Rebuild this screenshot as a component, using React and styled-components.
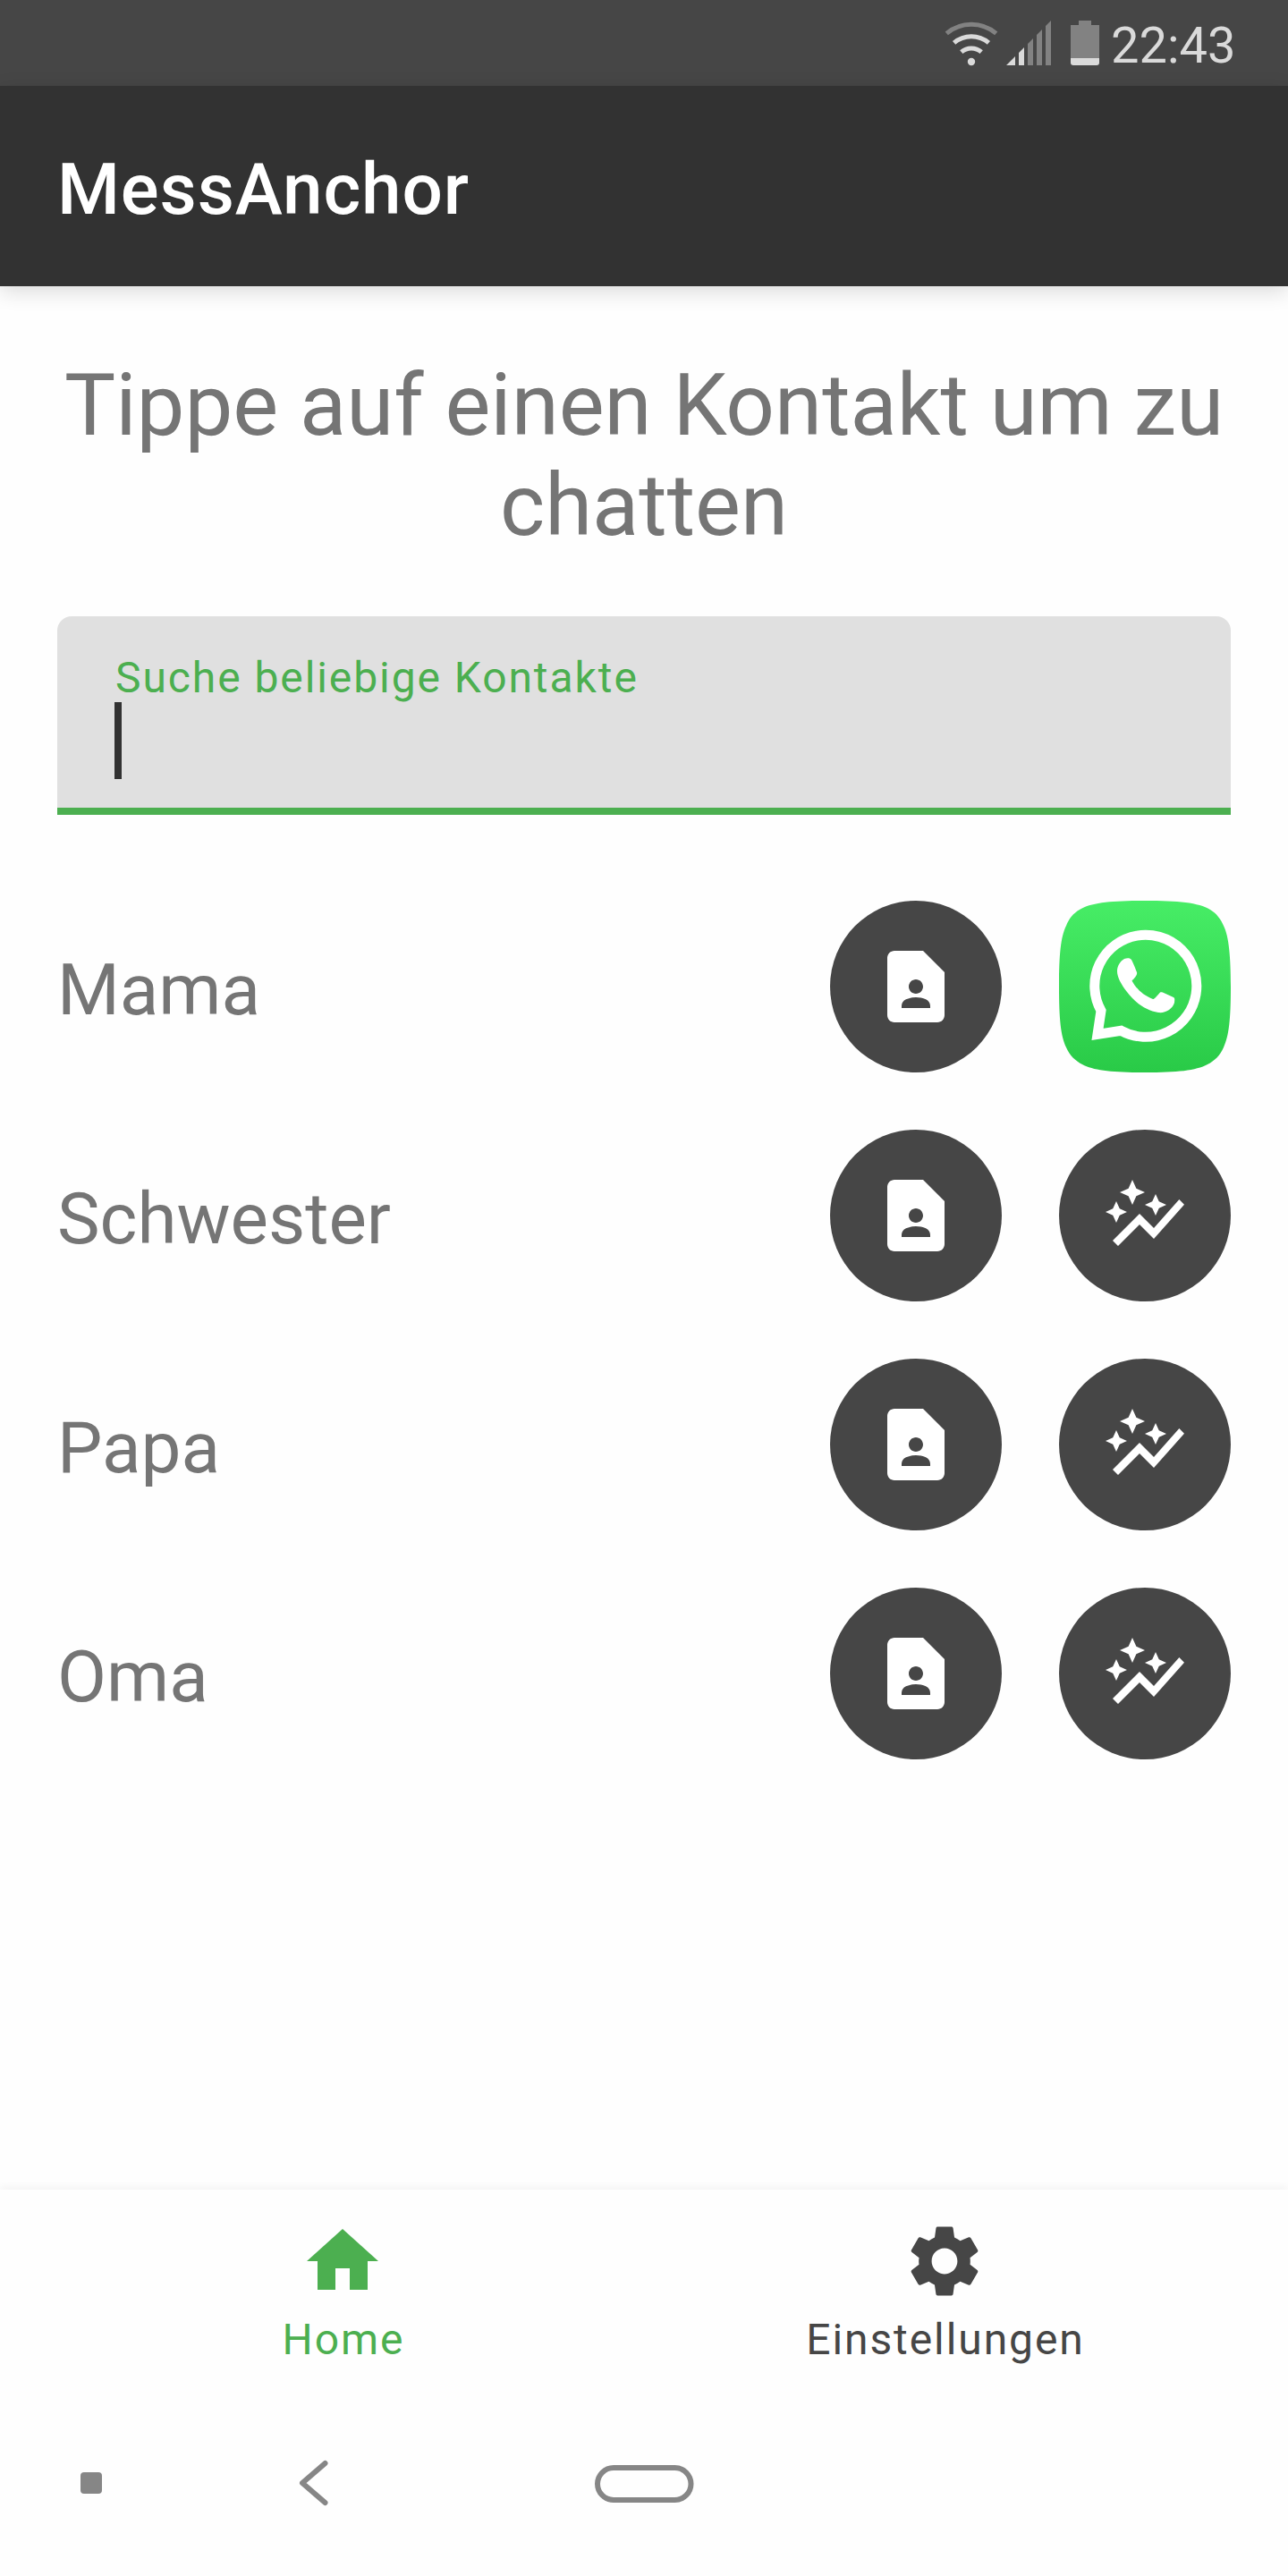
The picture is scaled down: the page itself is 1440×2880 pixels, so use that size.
import React from "react";
import styled, { createGlobalStyle } from "styled-components";

const Global = createGlobalStyle`
  * { box-sizing: border-box; }
  body { margin: 0; background: #fefefe; font-family: Roboto, "Liberation Sans", sans-serif; }
`;

const Screen = styled.div`
  width: 1440px;
  height: 2880px;
  display: flex;
  flex-direction: column;
  background: #fefefe;
  overflow: hidden;
`;

const StatusBar = styled.header`
  height: 96px;
  flex: none;
  display: flex;
  justify-content: flex-end;
  gap: 12px;
  padding-right: 60px;
  background: #464646;
`;

const StatusIcons = styled.svg`
  width: 180px;
  height: 96px;
  display: block;
`;

const Clock = styled.time`
  width: 138px;
  padding-top: 5px;
  font-size: 56px;
  line-height: 92px;
  color: #dadada;
  white-space: nowrap;
`;

const AppBar = styled.div`
  height: 224px;
  flex: none;
  display: flex;
  align-items: center;
  padding: 0 64px;
  background: #323232;
  box-shadow: 0 6px 22px rgba(0, 0, 0, 0.14);
`;

const AppTitle = styled.h1`
  margin: 0;
  padding-top: 8px;
  font-size: 80px;
  line-height: 94px;
  font-weight: 500;
  letter-spacing: 0.9px;
  color: #fff;
`;

const Content = styled.main`
  flex: 1;
  padding: 77px 64px 0;
`;

const Heading = styled.h2`
  margin: 0 -10px;
  font-size: 96px;
  line-height: 112px;
  font-weight: 400;
  text-align: center;
  color: #757575;
`;

const SearchField = styled.label`
  height: 222px;
  margin-top: 68px;
  display: flex;
  flex-direction: column;
  padding: 41px 64px 0;
  border-radius: 16px 16px 0 0;
  border-bottom: 8px solid #4caf50;
  background: #e0e0e0;
`;

const SearchLabel = styled.span`
  height: 55px;
  padding-left: 1px;
  font-size: 48px;
  line-height: 56px;
  letter-spacing: 1.92px;
  color: #4caf50;
`;

const Caret = styled.span`
  width: 8px;
  height: 86px;
  background: #323232;
`;

const ContactList = styled.ul`
  margin: 96px 0 0;
  padding: 0;
  display: flex;
  flex-direction: column;
  gap: 64px;
  list-style: none;
`;

const Contact = styled.li`
  height: 192px;
  display: flex;
  align-items: center;
  gap: 64px;
`;

const ContactName = styled.span`
  flex: 1;
  padding-top: 8px;
  font-size: 80px;
  line-height: 94px;
  color: #757575;
`;

const RoundButton = styled.button`
  width: 192px;
  height: 192px;
  display: flex;
  align-items: center;
  justify-content: center;
  padding: 0;
  border: 0;
  border-radius: 50%;
  background: #464646;
`;

const AppButton = styled.button`
  width: 192px;
  height: 192px;
  padding: 0;
  border: 0;
  background: none;

  svg { display: block; }
`;

const Glyph = styled.svg`
  width: 96px;
  height: 96px;
  display: block;
  fill: ${(p) => p.$color || "#fff"};
`;

const BottomNav = styled.nav`
  height: 224px;
  flex: none;
  display: flex;
  padding-left: 46.5px;
  background: #fefefe;
  box-shadow: 0 -4px 8px rgba(0, 0, 0, 0.04);
`;

const NavItem = styled.a`
  width: 673px;
  display: flex;
  flex-direction: column;
  align-items: center;
  padding-top: 32px;
  color: ${(p) => (p.$active ? "#4caf50" : "#464646")};
`;

const NavLabel = styled.span`
  margin-top: 12px;
  padding-left: 2px;
  font-size: 48px;
  line-height: 56px;
  letter-spacing: 1.92px;
`;

const SystemBar = styled.footer`
  height: 208px;
  flex: none;
  background: #fefefe;

  svg { display: block; }
`;

const WifiSignalBattery = () => (
  <StatusIcons viewBox="1050 0 180 96" aria-hidden="true">
    <g fill="none" strokeWidth="5">
      <path d="M1058.300 37.400 A43 43 0 0 1 1113.700 37.400" stroke="#828282" />
      <path d="M1066.600 47.800 A30 30 0 0 1 1105.400 47.800" stroke="#dadada" />
      <path d="M1074.800 58.200 A17 17 0 0 1 1097.200 58.200" stroke="#dadada" />
    </g>
    <circle cx="1086" cy="69" r="4.200" fill="#dadada" />
    <path d="M1125 73 L1135 63 V73 Z M1139 59 L1145 53 V73 H1139 Z" fill="#dadada" />
    <path d="M1149 49 L1155 43 V73 H1149 Z M1159 39 L1165 33 V73 H1159 Z M1169 29 L1175 23 V73 H1169 Z" fill="#828282" />
    <path d="M1206 23 H1220 V28 H1229 V65 H1197 V28 H1206 Z" fill="#828282" />
    <path d="M1197 65 H1229 V70 Q1229 73 1226 73 H1200 Q1197 73 1197 70 Z" fill="#dadada" />
  </StatusIcons>
);

const ContactPageIcon = () => (
  <Glyph viewBox="0 0 24 24">
    <path d="M14 2H6c-1.100 0-2 .9-2 2v16c0 1.100.89 2 1.990 2H18c1.100 0 2-.9 2-2V8l-6-6zm-2 8c1.100 0 2 .9 2 2s-.9 2-2 2-2-.9-2-2 .9-2 2-2zm4 8H8v-.57c0-.81.48-1.530 1.220-1.850.85-.37 1.790-.58 2.780-.58s1.930.21 2.780.58c.74.32 1.220 1.040 1.220 1.850V18z" />
  </Glyph>
);

const AutoGraphIcon = () => (
  <Glyph viewBox="0 0 24 24">
    <path d="M14.060 9.940 12 9l2.060-.94L15 6l.94 2.060L18 9l-2.060.94L15 12l-.94-2.060zM4 14l.94-2.060L7 11l-2.060-.94L4 8l-.94 2.060L1 11l2.060.94L4 14zm4.500-5 1.090-2.410L12 5.500 9.590 4.410 8.500 2 7.410 4.410 5 5.500l2.410 1.090L8.500 9zm-4 11.500 6-6.010 4 4L23 8.930l-1.410-1.410-7.090 7.970-4-4L3 19l1.500 1.500z" />
  </Glyph>
);

const WhatsAppIcon = () => (
  <svg width="192" height="192" viewBox="0 0 192 192">
    <defs>
      <linearGradient id="wa" x1="0" y1="0" x2="0" y2="1">
        <stop offset="0" stopColor="#47ed66" />
        <stop offset="1" stopColor="#29ca47" />
      </linearGradient>
    </defs>
    <path
      d="M96 0 C133 0 156 2 169 10 C176 14 181 21 184 28 C190 40 192 63 192 96 C192 133 190 151 184 164 C180 173 174 179 166 183 C153 190 132 192 96 192 C60 192 39 190 26 183 C18 179 12 173 8 164 C2 151 0 133 0 96 C0 60 2 40 8 28 C11 20 16 14 23 10 C36 2 59 0 96 0 Z"
      fill="url(#wa)"
    />
    <path
      d="M47 123 A57 57 0 1 1 69.500 145.300 L43 149.500 Z"
      fill="none"
      stroke="#fff"
      strokeWidth="11"
      strokeLinejoin="miter"
    />
    <path
      d="M73 65 C76 64 79 64 80.500 65.500 C82 67 85 75 87 80 C88 83 84 87 81.500 89.500 C86 98 94 106 105 110 C107 110 108 108 113 102.500 C114 102 116 102 117 103 L128 108 C130 109 129 112 129 114 C127 121 119 126 111 125 C98 123 86 115 76 102 C69 93 65 85 65 79 C65 73 68 68 73 65 Z"
      fill="#fff"
    />
  </svg>
);

const HomeIcon = () => (
  <Glyph viewBox="0 0 24 24" $color="#4caf50">
    <path d="M10 20v-6h4v6h5v-8h3L12 3 2 12h3v8z" />
  </Glyph>
);

const SettingsIcon = () => (
  <Glyph viewBox="0 0 24 24" $color="#464646">
    <path d="M19.140 12.940c.04-.3.06-.61.06-.94 0-.32-.02-.64-.07-.94l2.030-1.580c.18-.14.23-.41.12-.61l-1.920-3.320c-.12-.22-.37-.29-.59-.22l-2.390.96c-.5-.38-1.030-.7-1.620-.94l-.36-2.540c-.04-.24-.24-.41-.48-.41h-3.840c-.24 0-.43.17-.47.41l-.36 2.540c-.59.24-1.130.57-1.620.94l-2.390-.96c-.22-.08-.47 0-.59.22L2.740 8.870c-.12.21-.08.47.12.61l2.030 1.580c-.05.3-.09.63-.09.94s.02.64.07.94l-2.030 1.580c-.18.14-.23.41-.12.61l1.920 3.320c.12.22.37.29.59.22l2.390-.96c.5.38 1.030.7 1.620.94l.36 2.540c.05.24.24.41.48.41h3.840c.24 0 .44-.17.47-.41l.36-2.540c.59-.24 1.130-.56 1.620-.94l2.390.96c.22.08.47 0 .59-.22l1.920-3.320c.12-.22.07-.47-.12-.61l-2.010-1.580zM12 15.600c-1.980 0-3.600-1.620-3.600-3.600s1.620-3.600 3.600-3.600 3.600 1.620 3.600 3.600-1.620 3.600-3.600 3.600z" />
  </Glyph>
);

const SystemKeys = () => (
  <svg width="1440" height="208" viewBox="0 2672 1440 208">
    <rect x="90" y="2764" width="24" height="24" rx="4" fill="#868686" />
    <path d="M363.500 2754 L338 2776 L363.500 2798" fill="none" stroke="#868686" strokeWidth="6" strokeLinecap="round" strokeLinejoin="round" />
    <rect x="668" y="2759" width="104.500" height="36" rx="18" fill="none" stroke="#868686" strokeWidth="6" />
  </svg>
);

const contacts = [
  { name: "Mama", whatsapp: true },
  { name: "Schwester" },
  { name: "Papa" },
  { name: "Oma" },
];

export default function App() {
  return (
    <>
      <Global />
      <Screen>
        <StatusBar>
          <WifiSignalBattery />
          <Clock>22:43</Clock>
        </StatusBar>
        <AppBar>
          <AppTitle>MessAnchor</AppTitle>
        </AppBar>
        <Content>
          <Heading>Tippe auf einen Kontakt um zu chatten</Heading>
          <SearchField>
            <SearchLabel>Suche beliebige Kontakte</SearchLabel>
            <Caret />
          </SearchField>
          <ContactList>
            {contacts.map((c) => (
              <Contact key={c.name}>
                <ContactName>{c.name}</ContactName>
                <RoundButton>
                  <ContactPageIcon />
                </RoundButton>
                {c.whatsapp ? (
                  <AppButton>
                    <WhatsAppIcon />
                  </AppButton>
                ) : (
                  <RoundButton>
                    <AutoGraphIcon />
                  </RoundButton>
                )}
              </Contact>
            ))}
          </ContactList>
        </Content>
        <BottomNav>
          <NavItem $active>
            <HomeIcon />
            <NavLabel>Home</NavLabel>
          </NavItem>
          <NavItem>
            <SettingsIcon />
            <NavLabel>Einstellungen</NavLabel>
          </NavItem>
        </BottomNav>
        <SystemBar>
          <SystemKeys />
        </SystemBar>
      </Screen>
    </>
  );
}
